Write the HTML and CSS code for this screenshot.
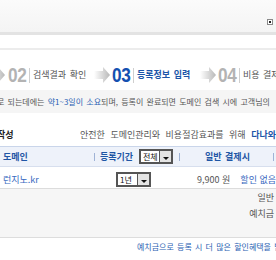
FILE: index.html
```html
<!DOCTYPE html>
<html lang="ko">
<head>
<meta charset="utf-8">
<link rel="stylesheet" href="styles.css">
</head>
<body>
<div class="page">
  <div class="topbar"><span class="topicon"><span class="topdot"></span></span></div>
  <div class="subbar"></div>
  <div class="steps">
    <div class="step">
      <svg class="arrow arrow-first" viewBox="0 0 16 16"><defs><linearGradient id="ga" x1="0" x2="1" y1="0" y2="0"><stop offset="0" stop-color="#ffffff"/><stop offset="1" stop-color="#b8b8b8"/></linearGradient></defs><polygon points="0,4 9,4 9,0 16,8 9,16 9,12 0,12" fill="url(#ga)"/></svg>
      <span class="num gray"><span class="digits">02</span></span><span class="sep"></span><span class="label l1">검색결과 확인</span>
    </div>
    <div class="step">
      <svg class="arrow arrow-mid" viewBox="0 0 16 16"><polygon points="0,4 9,4 9,0 16,8 9,16 9,12 0,12" fill="url(#ga)"/></svg>
      <span class="num blue"><span class="digits">03</span></span><span class="sep"></span><span class="label l2 active">등록정보 입력</span>
    </div>
    <div class="step">
      <svg class="arrow arrow-last" viewBox="0 0 16 16"><polygon points="0,4 9,4 9,0 16,8 9,16 9,12 0,12" fill="url(#ga)"/></svg>
      <span class="num gray"><span class="digits">04</span></span><span class="sep"></span><span class="label l3">비용 결제</span>
    </div>
  </div>
  <div class="notice"><span class="cut">로</span> 되는데에는 <span class="em">약1~3일이 소요</span>되며, 등록이 완료되면 도메인 검색 시에 고객님의</div>
  <div class="titlerow"><span class="title">작성</span><span class="desc">안전한 도메인관리와 비용절감효과를 위해 <b class="blue-b">다나와</b></span></div>
  <div class="thead">
    <div class="c1 th">도메인</div>
    <span class="vbar"></span>
    <div class="c2 th">등록기간</div>
    <div class="sel sel-head"><span class="sel-text">전체</span><span class="sel-btn"></span></div>
    <span class="vbar vbar2"></span>
    <div class="c3 th">일반 결제시</div>
    <span class="vbar vbar3"></span>
  </div>
  <div class="trow">
    <div class="c1 dom">런지노.kr</div>
    <div class="sel sel-row"><span class="sel-text">1년</span><span class="sel-btn"></span></div>
    <div class="price">9,900 원</div>
    <div class="disc">할인 없음</div>
  </div>
  <div class="summary">
    <div class="srow"><span class="slabel">일반</span></div>
    <div class="srow"><span class="slabel">예치금</span></div>
  </div>
  <div class="foot">예치금으로 등록 시 더 많은 할인혜택을 받으세요</div>
</div>
</body>
</html>
```
FILE: styles.css
```css
* { box-sizing: border-box; }
html, body { margin: 0; padding: 0; }
body {
  width: 276px;
  height: 260px;
  overflow: hidden;
  background: #fff;
  font-family: "Noto Sans CJK KR", "DejaVu Sans", sans-serif;
  font-size: 9px;
  color: #444;
}
.page { width: 276px; overflow: hidden; }

.topbar {
  height: 35px;
  background: linear-gradient(#fbfbfb, #f4f4f4);
  border-bottom: 3px solid #e3e3e3;
  display: flex;
  justify-content: flex-end;
  padding: 19px 3px 0 0;
}
.topicon {
  width: 6px; height: 6px;
  border: 1px solid #8a8a8a;
  background: #fff;
  display: flex; align-items: center; justify-content: center;
}
.topdot { width: 2px; height: 2px; background: #222; }

.subbar {
  height: 15px;
  border-bottom: 2px solid #ececec;
}

.steps {
  height: 40px;
  padding-top: 10px;
  display: flex;
  align-items: center;
  margin-left: -11px;
  white-space: nowrap;
}
.step { display: flex; align-items: center; }
.arrow { width: 16px; height: 16px; flex: none; }
.arrow-first { margin-right: 3px; }
.arrow-mid { margin-right: 2px; }
.arrow-last { margin-right: 2px; }
.num {
  display: block;
  width: 20px;
  height: 16px;
  flex: none;
  overflow: visible;
}
.digits {
  display: inline-block;
  font-family: "Liberation Sans", "DejaVu Sans", sans-serif;
  font-weight: bold;
  font-size: 21px;
  line-height: 16px;
  letter-spacing: -0.5px;
  transform: scaleX(0.82);
  transform-origin: left center;
}
.num.gray { color: #b3b3b3; }
.num.blue { color: #1450b0; }
.sep { width: 1px; height: 15px; background: #cfcfcf; margin-left: 1px; flex: none; }
.label { font-size: 9px; line-height: 12px; color: #555; margin-left: 3px; word-spacing: 1px; }
.l1 { width: 56px; margin-right: 5px; }
.l2 { width: 57px; margin-right: 6px; }
.active { color: #1c55a8; font-weight: bold; }

.notice {
  height: 23px;
  line-height: 23px;
  background: #f5f5f5;
  font-size: 8px;
  color: #555;
  white-space: nowrap;
  margin-left: -3px;
  word-spacing: 1px;
}
.notice .em { color: #2b5fb3; }

.titlerow {
  height: 33px;
  padding-top: 16px;
  display: flex;
  line-height: 12px;
  white-space: nowrap;
}
.title { font-weight: bold; color: #222; margin-left: -3px; width: 106px; font-size: 9px; }
.desc { color: #555; font-size: 9px; word-spacing: 3px; }
.blue-b { color: #1c55a8; }

.thead {
  height: 21px;
  background: #eef2fa;
  border-top: 1px solid #c9d5ea;
  border-bottom: 1px solid #d7dfee;
  display: flex;
  align-items: center;
  white-space: nowrap;
}
.th { color: #1f56a5; font-weight: bold; font-size: 9px; line-height: 12px; }
.c1 { width: 94px; padding-left: 3px; }
.vbar { width: 1px; height: 8px; background: #9fb3d6; flex: none; }
.c2 { margin-left: 5px; width: 39px; }
.vbar2 { margin-left: 6px; }
.c3 { margin-left: 25px; width: 68px; word-spacing: 1px; }
.vbar3 { margin-left: 0; }

.sel {
  display: flex;
  height: 15px;
  border: 2px solid #555;
  background: #fff;
  flex: none;
}
.sel-head { width: 34px; }
.sel-text { flex: 1; font-size: 8px; line-height: 11px; color: #111; padding-left: 2px; }
.sel-btn {
  width: 12px;
  background: #e4e4e4;
  border-left: 1px solid #555;
  display: flex;
  align-items: flex-end;
  justify-content: center;
  padding-bottom: 2px;
}
.sel-btn::after {
  content: "";
  width: 0; height: 0;
  border-left: 3px solid transparent;
  border-right: 3px solid transparent;
  border-top: 3px solid #111;
}

.trow {
  height: 22px;
  border-bottom: 1px solid #dcdcdc;
  display: flex;
  align-items: center;
  white-space: nowrap;
  padding-top: 3px;
}
.dom { color: #3768c0; font-size: 9px; width: 117px; }
.sel-row { width: 35px; }
.price { width: 80px; text-align: right; color: #555; font-size: 9px; }
.disc { margin-left: 10px; color: #3768c0; font-size: 9px; }

.summary {
  height: 49px;
  background: #f6f6f6;
  border-bottom: 1px solid #dddddd;
  padding-top: 1px;
}
.srow { height: 16px; line-height: 16px; padding-left: 240px; display: flex; }
.slabel { width: 34px; text-align: right; color: #555; font-size: 9px; }

.foot {
  padding-top: 3px;
  line-height: 12px;
  padding-left: 137px;
  white-space: nowrap;
  color: #2b5fb3;
  font-size: 8px;
  word-spacing: 1px;
}
```
